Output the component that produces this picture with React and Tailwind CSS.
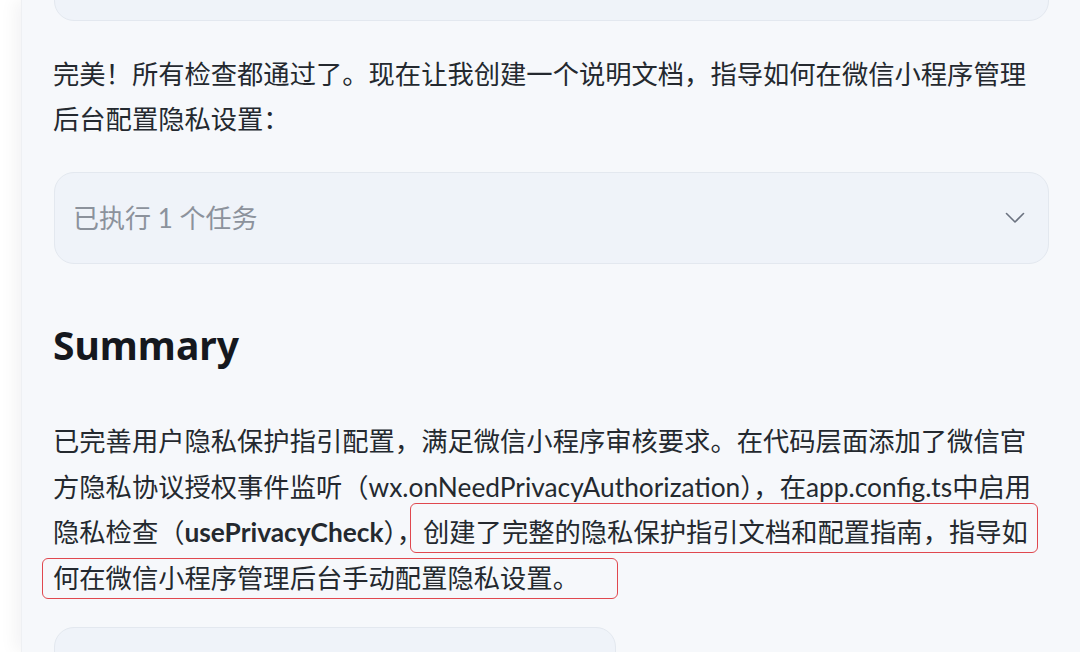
export default function App() {
  return (
    <div className="flex h-[652px] w-[1080px] overflow-hidden bg-white [font-family:'Lato','Noto_Sans_CJK_SC',sans-serif]">
      <div className="w-[21px] shrink-0 bg-white" />

      <main className="relative min-w-0 flex-1 border-l border-[#eef0f3] bg-[#f6f8fb] pl-[31px] pr-[31px] shadow-[-6px_0_16px_rgba(15,23,42,0.05)]">
        {/* previous tool card, scrolled mostly out of view */}
        <div className="-mt-[60px] ml-[1px] h-[81px] rounded-[20px] border border-[#e3e8ef] bg-[#eff3f9]" />

        <p className="mt-[31px] text-[26.3px] leading-[45px] text-[#24292f]">
          完美！所有检查都通过了。现在让我创建一个说明文档，指导如何在微信小程序管理
          <br />
          后台配置隐私设置：
        </p>

        <button className="ml-[1px] mt-[30px] flex h-[92px] w-[calc(100%-1px)] items-center justify-between rounded-[20px] border border-[#e3e8ef] bg-[#eff3f9] pl-[18px] pr-[23px] text-left">
          <span className="text-[26px] text-[#8c929c]">已执行 1 个任务</span>
          <svg width="20" height="12" viewBox="0 0 20 12" fill="none">
            <polyline points="1.5,1.5 10,10 18.5,1.5" stroke="#6b7280" strokeWidth="1.6" strokeLinecap="round" strokeLinejoin="round" />
          </svg>
        </button>

        <h2 className="mt-[55px] text-[39px] font-bold leading-[52px] text-[#15181e] [font-family:'Noto_Sans',sans-serif]">Summary</h2>

        <div className="mt-[48px] text-[26.3px] leading-[45.5px] text-[#24292f]">
          <div className="whitespace-nowrap">已完善用户隐私保护指引配置，满足微信小程序审核要求。在代码层面添加了微信官</div>
          <div className="whitespace-nowrap">方隐私协议授权事件监听（wx.onNeedPrivacyAuthorization），在app.config.ts中启用</div>
          <div className="whitespace-nowrap">
            隐私检查（<b className="font-bold">usePrivacyCheck</b>），
            <span className="relative inline-block h-[45.5px] align-top">
              <span className="pointer-events-none absolute -left-[13px] -right-[10px] -top-[7px] bottom-[3px] rounded-[6px] border-[1.5px] border-[#e0484f]" />
              创建了完整的隐私保护指引文档和配置指南，指导如
            </span>
          </div>
          <div className="whitespace-nowrap">
            <span className="relative inline-block h-[45.5px] align-top">
              <span className="pointer-events-none absolute -left-[11px] -right-[39px] top-[2px] bottom-[2px] rounded-[6px] border-[1.5px] border-[#e0484f]" />
              何在微信小程序管理后台手动配置隐私设置。
            </span>
          </div>
        </div>

        <div className="ml-[1px] mt-[26px] h-[80px] w-[562px] rounded-[20px] border border-[#e3e8ef] bg-[#eff3f9]" />
      </main>
    </div>
  );
}
